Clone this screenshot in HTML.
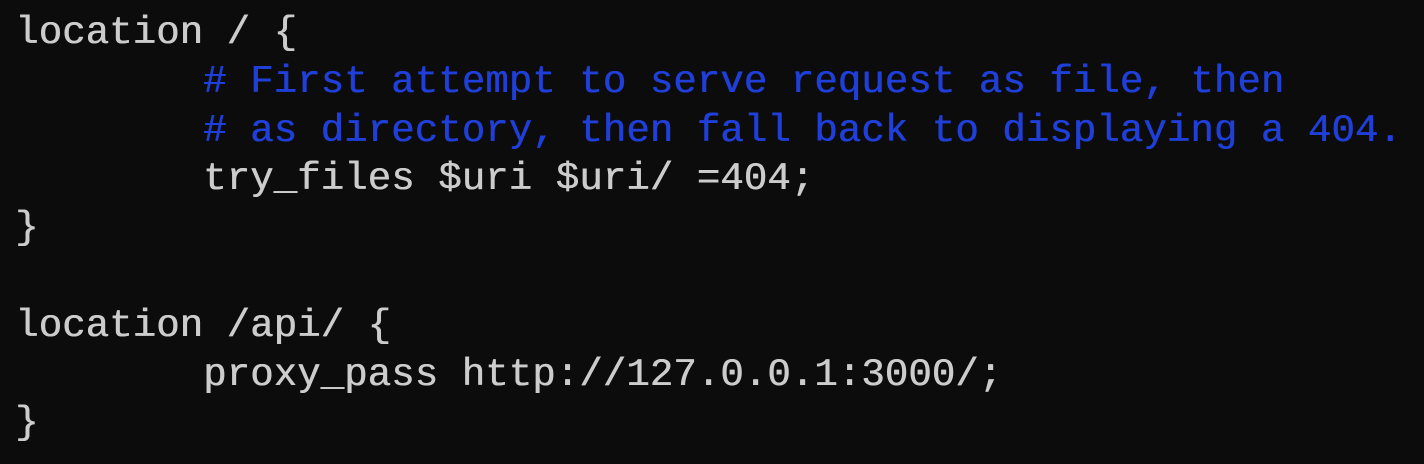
<!DOCTYPE html>
<html><head><style>
html,body{margin:0;padding:0;background:#0c0c0c;width:1424px;height:464px;overflow:hidden}
pre{margin:0;padding:9px 0 0 15px;font-family:"Liberation Mono",monospace;font-size:39px;line-height:48.8px;color:#cccccc;letter-spacing:0.1px;text-shadow:0.6px 0 0 currentColor}
.c{color:#1f3fd8}
</style></head><body><pre>location / {
        <span class="c"># First attempt to serve request as file, then</span>
        <span class="c"># as directory, then fall back to displaying a 404.</span>
        try_files $uri $uri/ =404;
}

location /api/ {
        proxy_pass http://127.0.0.1:3000/;
}</pre></body></html>
